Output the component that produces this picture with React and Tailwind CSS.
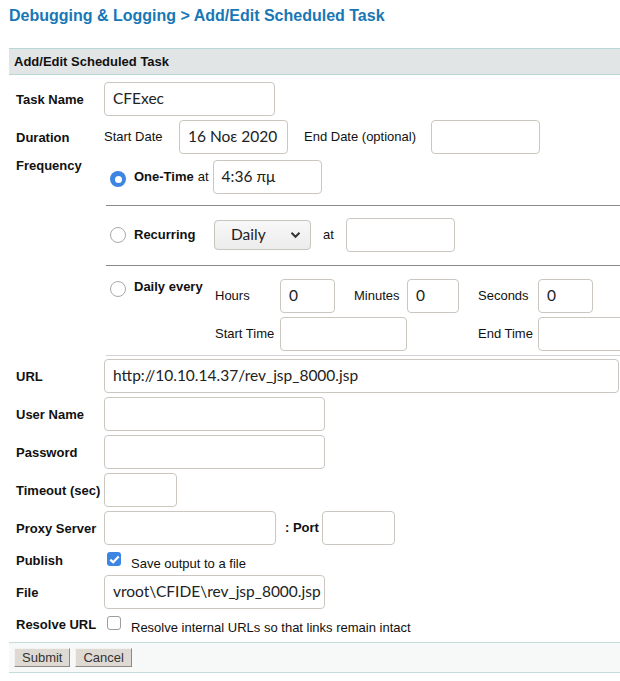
import React from "react";

const inputFont = "font-['Lato','Open_Sans',sans-serif] text-[15.5px] text-[#222]";

function Box({ w, children, className = "" }) {
  return (
    <div
      className={`h-[34px] shrink-0 rounded-[4px] border border-[#cbc6c0] bg-white px-[8px] flex items-center overflow-hidden whitespace-nowrap ${inputFont} ${className}`}
      style={{ width: w }}
    >
      {children}
    </div>
  );
}

function Radio({ checked }) {
  if (checked) {
    return (
      <span className="w-[16px] h-[16px] shrink-0 rounded-full bg-[#3d85e2] flex items-center justify-center">
        <span className="w-[7px] h-[7px] rounded-full bg-white" />
      </span>
    );
  }
  return <span className="block w-[16px] h-[16px] shrink-0 rounded-full border border-[#a9a9a9] bg-white" />;
}

function Row({ label, children, className = "", labelClass = "" }) {
  return (
    <div className={`flex ${className}`}>
      <div className={`w-[88px] shrink-0 font-bold leading-[15px] ${labelClass}`}>{label}</div>
      <div className="flex-1 min-w-0 flex">{children}</div>
    </div>
  );
}

const btn =
  "h-[19px] px-[7px] bg-[#dedad3] border border-t-[#f4f2ee] border-l-[#f4f2ee] border-r-[#8d8a84] border-b-[#8d8a84] text-[13px] leading-[15px] text-[#333] font-['Liberation_Sans',Arial,sans-serif]";

export default function App() {
  return (
    <div className="w-[620px] min-h-[681px] overflow-hidden bg-white font-['Liberation_Sans',Arial,sans-serif] text-[13px] text-[#111]">
      <h1 className="pl-[9px] pt-[7px] text-[16px] font-bold leading-[18px] text-[#1877b5]">
        Debugging &amp; Logging &gt; Add/Edit Scheduled Task
      </h1>
      <div className="mt-[23px] ml-[9px] h-[27px] border-y border-[#b8d7d7] bg-[#e1e5e5] pl-[5px] flex items-center font-bold">
        Add/Edit Scheduled Task
      </div>

      <div className="pl-[16px] pt-[7px]">
        {/* Task Name */}
        <Row label="Task Name" className="items-center h-[34px]">
          <Box w={171}>CFExec</Box>
        </Row>

        {/* Duration */}
        <Row label="Duration" className="items-center h-[34px] mt-[4px]">
          <div className="flex items-center">
            <span className="w-[75px] shrink-0">Start Date</span>
            <Box w={109}>16 Νοε 2020</Box>
            <span className="ml-[16px] w-[127px] shrink-0">End Date (optional)</span>
            <Box w={109} />
          </div>
        </Row>

        {/* Frequency */}
        <Row label="Frequency" className="mt-[4px] items-start">
          <div className="ml-[2px] flex-1 min-w-0 pt-[2px]">
            {/* One-Time */}
            <div className="flex items-center h-[34px] pl-[4px]">
              <span className="mt-[4px] shrink-0"><Radio checked /></span>
              <span className="ml-[8px] font-bold">One-Time</span>
              <span className="ml-[4px] mr-[4px]">at</span>
              <Box w={109}>4:36 πμ</Box>
            </div>
            <div className="mt-[11px] h-px bg-[#8a8a8a]" />
            {/* Recurring */}
            <div className="mt-[12px] flex items-center h-[34px] pl-[4px]">
              <div className="w-[104px] shrink-0 flex items-center">
                <Radio />
                <span className="ml-[8px] font-bold">Recurring</span>
              </div>
              <div className="h-[30px] w-[97px] shrink-0 rounded-[4px] border border-[#c8c4be] bg-gradient-to-b from-[#f8f8f8] to-[#ececec] flex items-center justify-between pl-[16px] pr-[9px]">
                <span className={inputFont}>Daily</span>
                <svg width="11" height="8" viewBox="0 0 11 8">
                  <path d="M1.5 1.8 L5.5 5.8 L9.5 1.8" fill="none" stroke="#333" strokeWidth="2" />
                </svg>
              </div>
              <span className="ml-[12px] w-[23px] shrink-0">at</span>
              <Box w={109} />
            </div>
            <div className="mt-[13px] h-px bg-[#8a8a8a]" />
            {/* Daily every */}
            <div className="mt-[13px] flex pl-[4px]">
              <div className="w-[105px] shrink-0 flex items-start">
                <span className="mt-[2px] shrink-0"><Radio /></span>
                <span className="ml-[8px] font-bold leading-[15px] whitespace-nowrap">Daily every</span>
              </div>
              <div className="grid grid-cols-[65px_74px_53px_71px_60px_auto] gap-y-[4px] items-center">
                <span>Hours</span>
                <Box w={55}>0</Box>
                <span>Minutes</span>
                <Box w={52}>0</Box>
                <span>Seconds</span>
                <Box w={55}>0</Box>
                <span>Start Time</span>
                <div className="col-span-3"><Box w={127} /></div>
                <span>End Time</span>
                <Box w={127} />
              </div>
            </div>
            <div className="mt-[4px] h-px bg-[#d2d2d2]" />
          </div>
        </Row>

        {/* URL */}
        <Row label="URL" className="items-center h-[34px] mt-[3px]">
          <Box w={515}>http://10.10.14.37/rev_jsp_8000.jsp</Box>
        </Row>
        <Row label="User Name" className="items-center h-[34px] mt-[4px]">
          <Box w={221} />
        </Row>
        <Row label="Password" className="items-center h-[34px] mt-[4px]">
          <Box w={221} />
        </Row>
        <Row label="Timeout (sec)" className="items-center h-[34px] mt-[4px]">
          <Box w={73} />
        </Row>
        <Row label="Proxy Server" className="items-center h-[34px] mt-[4px]">
          <div className="flex items-center">
            <Box w={172} />
            <span className="ml-[9px] w-[37px] shrink-0 font-bold">: Port</span>
            <Box w={73} />
          </div>
        </Row>

        {/* Publish */}
        <Row label="Publish" className="items-center h-[22px] mt-[4px]">
          <div className="flex items-start h-[22px] pl-[3px]">
            <span className="mt-[3px] w-[14px] h-[14px] shrink-0 rounded-[3px] bg-[#3d85e2] flex items-center justify-center">
              <svg width="11" height="9" viewBox="0 0 11 9">
                <path d="M1.3 4.6 L4.2 7.3 L9.7 1.4" fill="none" stroke="#fff" strokeWidth="2.2" />
              </svg>
            </span>
            <span className="ml-[10px] mt-[7px] leading-[15px]">Save output to a file</span>
          </div>
        </Row>

        {/* File */}
        <Row label="File" className="items-center h-[34px] mt-[4px]">
          <Box w={221}>vroot\CFIDE\rev_jsp_8000.jsp</Box>
        </Row>

        {/* Resolve URL */}
        <Row label="Resolve URL" className="items-center h-[22px] mt-[4px]">
          <div className="flex items-start h-[22px] pl-[3px]">
            <span className="mt-[3px] w-[14px] h-[14px] shrink-0 rounded-[3px] border border-[#9d9d9d] bg-white" />
            <span className="ml-[10px] mt-[7px] leading-[15px]">Resolve internal URLs so that links remain intact</span>
          </div>
        </Row>
      </div>

      {/* Bottom bar */}
      <div className="mt-[7px] ml-[9px] h-[31px] border-y border-[#c6dcdc] bg-[#f7f9f9] pl-[5px] flex items-center gap-[5px]">
        <button className={btn}>Submit</button>
        <button className={btn}>Cancel</button>
      </div>
    </div>
  );
}
